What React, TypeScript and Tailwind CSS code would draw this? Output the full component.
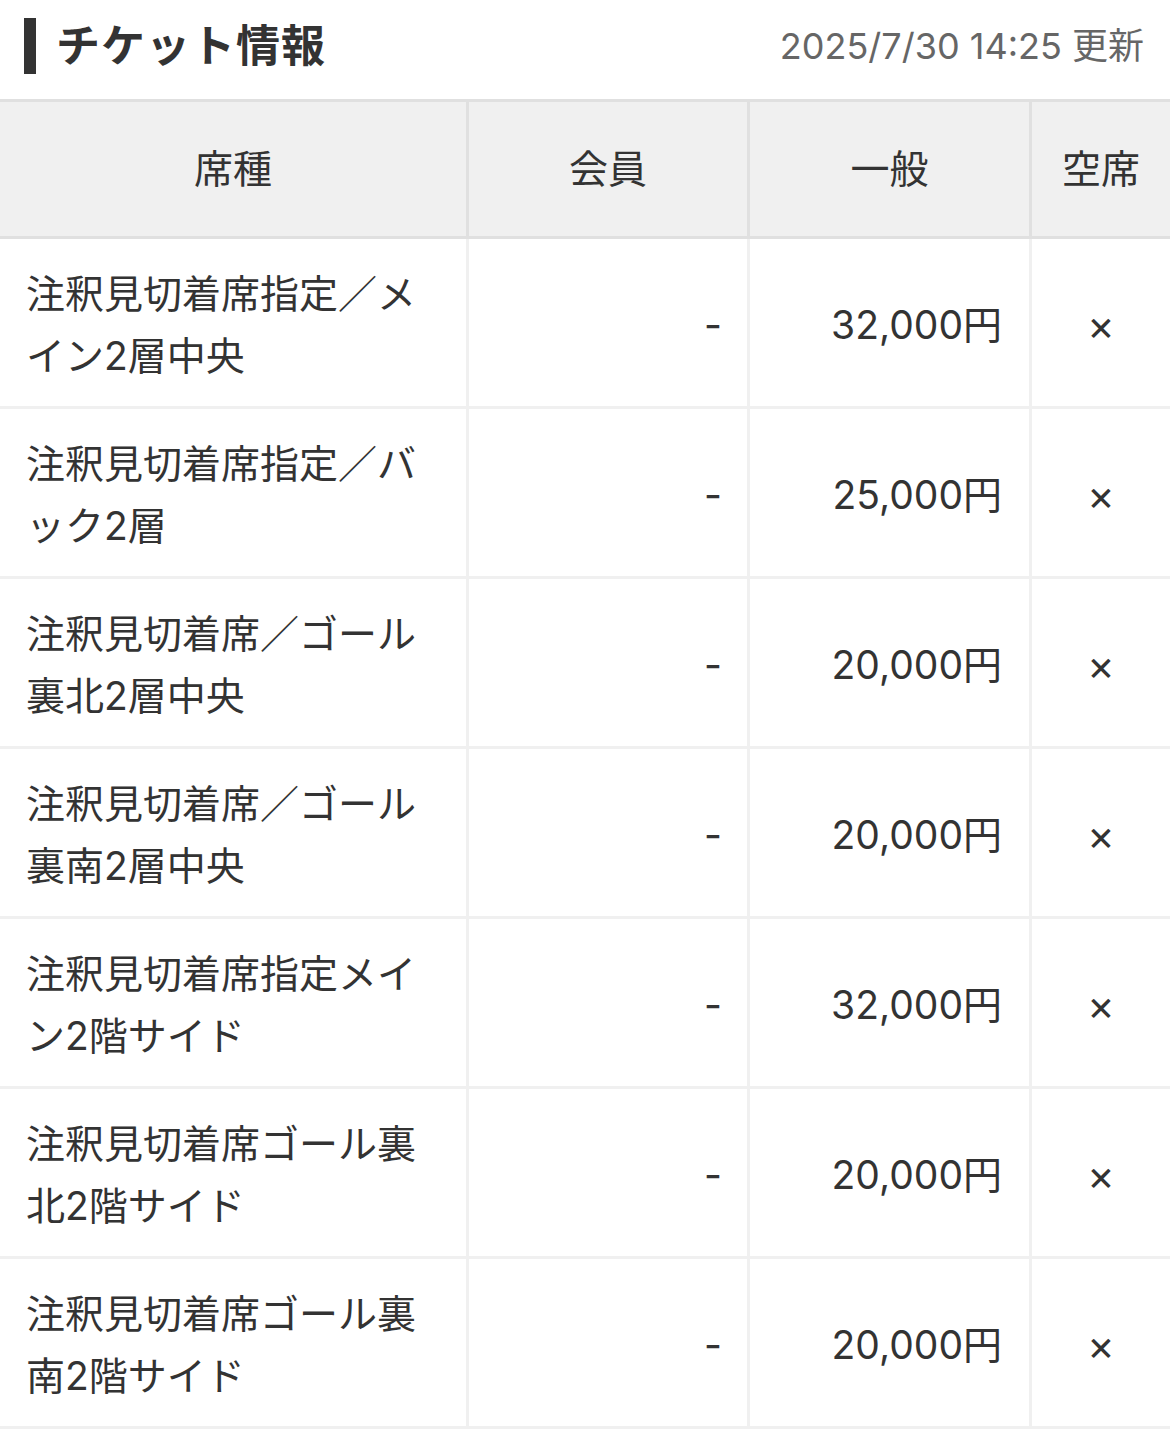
import React from "react";

type Row = {
  name: string;
  member: string;
  general: string;
  vacancy: string;
};

const rows: Row[] = [
  { name: "注釈見切着席指定／メイン2層中央", member: "-", general: "32,000円", vacancy: "×" },
  { name: "注釈見切着席指定／バック2層", member: "-", general: "25,000円", vacancy: "×" },
  { name: "注釈見切着席／ゴール裏北2層中央", member: "-", general: "20,000円", vacancy: "×" },
  { name: "注釈見切着席／ゴール裏南2層中央", member: "-", general: "20,000円", vacancy: "×" },
  { name: "注釈見切着席指定メイン2階サイド", member: "-", general: "32,000円", vacancy: "×" },
  { name: "注釈見切着席ゴール裏北2階サイド", member: "-", general: "20,000円", vacancy: "×" },
  { name: "注釈見切着席ゴール裏南2階サイド", member: "-", general: "20,000円", vacancy: "×" },
];

const font = {
  fontFamily: 'Inter, "Noto Sans CJK JP", "Noto Sans", sans-serif',
};

export default function App() {
  return (
    <div className="w-[1170px] min-h-[1438px] bg-white text-[#333]" style={font}>
      {/* Title bar */}
      <div className="flex h-[99px] items-center justify-between pb-[7px] pl-[24px] pr-[26px]">
        <div className="flex items-center gap-[20px]">
          <span className="block h-[56px] w-[12px] bg-[#333]" />
          <h2 className="text-[44px] font-bold leading-none tracking-[1px]">チケット情報</h2>
        </div>
        <p className="text-[36px] leading-none text-[#666]">2025/7/30 14:25 更新</p>
      </div>

      {/* Table */}
      <div className="border-t-[3px] border-[#e0e0e0]">
        <div className="grid h-[137px] grid-cols-[469px_281px_282px_1fr] border-b-[3px] border-[#e0e0e0] bg-[#f0f0f0] text-[39px]">
          <div className="flex items-center justify-center border-r-[3px] border-[#e0e0e0]">席種</div>
          <div className="flex items-center justify-center border-r-[3px] border-[#e0e0e0]">会員</div>
          <div className="flex items-center justify-center border-r-[3px] border-[#e0e0e0]">一般</div>
          <div className="flex items-center justify-center">空席</div>
        </div>

        {rows.map((r, i) => (
          <div
            key={i}
            className="grid h-[170px] grid-cols-[469px_281px_282px_1fr] border-b-[3px] border-[#f0f0f0] text-[39px] leading-[62px]"
          >
            <div className="flex items-center border-r-[3px] border-[#f0f0f0] pt-[5px] pl-[26px] pr-[24px]">
              <span className="break-all">{r.name}</span>
            </div>
            <div className="flex items-center justify-end border-r-[3px] border-[#f0f0f0] pt-[5px] pr-[25px]">
              {r.member}
            </div>
            <div className="flex items-center justify-end border-r-[3px] border-[#f0f0f0] pt-[5px] pr-[27px]">
              {r.general}
            </div>
            <div className="flex items-center justify-center pt-[4px] text-[42px]">{r.vacancy}</div>
          </div>
        ))}
      </div>
    </div>
  );
}
